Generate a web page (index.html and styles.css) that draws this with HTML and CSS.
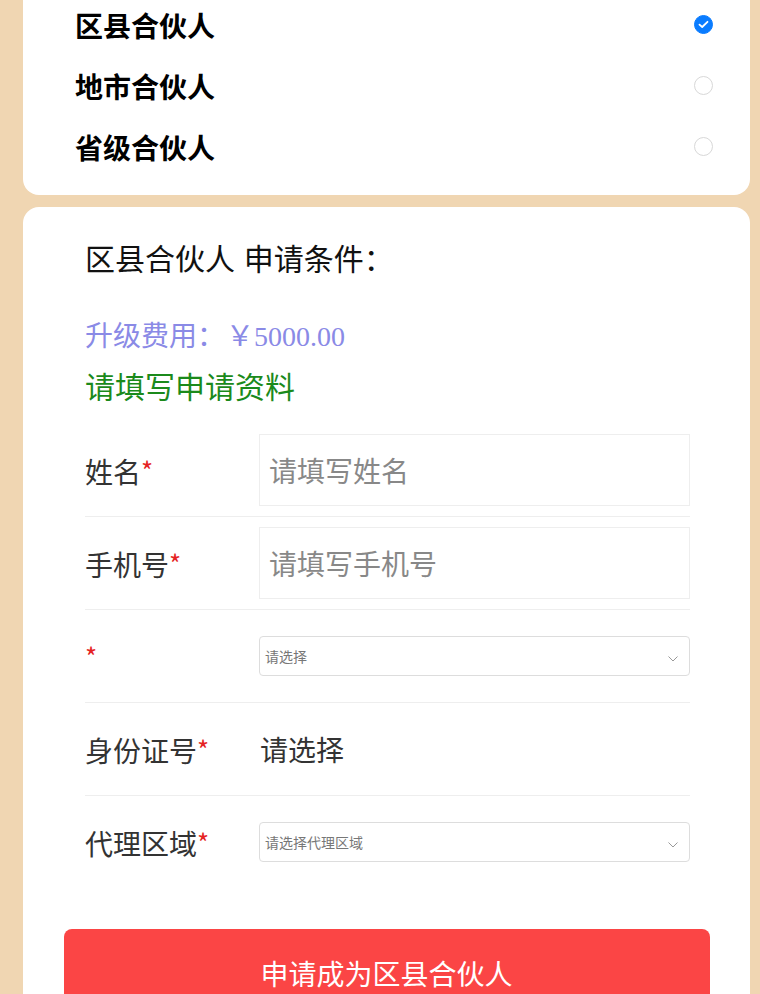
FILE: index.html
```
<!DOCTYPE html>
<html lang="zh-CN">
<head>
    <meta charset="UTF-8">
    <meta name="viewport" content="width=device-width, initial-scale=1.0">
    <title>申请合伙人</title>
    <link rel="stylesheet" href="styles.css">
</head>
<body>
    <div class="card level-card">
        <div class="level-row">
            <span class="level-name">区县合伙人</span>
            <span class="radio checked">
                <svg width="11" height="9" viewBox="0 0 11 9"><path d="M1.5 4.6 L4.2 7 L9.5 1.8" fill="none" stroke="#fff" stroke-width="1.8" stroke-linecap="round" stroke-linejoin="round"/></svg>
            </span>
        </div>
        <div class="level-row">
            <span class="level-name">地市合伙人</span>
            <span class="radio"></span>
        </div>
        <div class="level-row">
            <span class="level-name">省级合伙人</span>
            <span class="radio"></span>
        </div>
    </div>

    <div class="card apply-card">
        <div class="apply-body">
            <div class="apply-title">区县合伙人 申请条件：</div>
            <div class="fee">升级费用：<span class="price">￥5000.00</span></div>
            <div class="fill-tip">请填写申请资料</div>

            <div class="form-row">
                <div class="form-label">姓名<span class="req">*</span></div>
                <input class="form-input" type="text" placeholder="请填写姓名">
            </div>
            <div class="form-row">
                <div class="form-label">手机号<span class="req">*</span></div>
                <input class="form-input" type="text" placeholder="请填写手机号">
            </div>
            <div class="form-row">
                <div class="form-label"><span class="req">*</span></div>
                <div class="form-select">
                    <span>请选择</span>
                    <svg width="10" height="6" viewBox="0 0 10 6"><path d="M0.5 0.5 L5 5 L9.5 0.5" fill="none" stroke="#999" stroke-width="1"/></svg>
                </div>
            </div>
            <div class="form-row">
                <div class="form-label">身份证号<span class="req">*</span></div>
                <div class="form-text">请选择</div>
            </div>
            <div class="form-row last">
                <div class="form-label">代理区域<span class="req">*</span></div>
                <div class="form-select">
                    <span>请选择代理区域</span>
                    <svg width="10" height="6" viewBox="0 0 10 6"><path d="M0.5 0.5 L5 5 L9.5 0.5" fill="none" stroke="#999" stroke-width="1"/></svg>
                </div>
            </div>
        </div>
        <button class="submit-btn">申请成为区县合伙人</button>
    </div>
</body>
</html>
```

FILE: styles.css
```
body {
    margin: 0;
    padding: 0 10px 0 23px;
    background: #f0d6b2;
    font-family: "Noto Sans CJK SC", sans-serif;
    color: #333;
}
.card {
    background: #fff;
    border-radius: 16px;
}
.level-card {
    margin-top: -21px;
    padding: 15px 37px 18px 52px;
    border-top-left-radius: 0;
    border-top-right-radius: 0;
}
.level-row {
    height: 61px;
    display: flex;
    align-items: center;
    justify-content: space-between;
}
.level-name {
    font-size: 28px;
    font-weight: bold;
    color: #000;
}
.radio {
    width: 17px;
    height: 17px;
    border: 1px solid #d8d8d8;
    border-radius: 50%;
    display: flex;
    align-items: center;
    justify-content: center;
}
.radio.checked {
    background: #0a7cff;
    border-color: #0a7cff;
}
.apply-card {
    margin-top: 12px;
    padding: 30px 0 10px;
}
.apply-body {
    padding: 0 60px 0 62px;
}
.apply-title {
    font-size: 30px;
    line-height: 40px;
    color: #111;
    word-spacing: 2px;
}
.fee {
    margin-top: 32px;
    font-size: 28px;
    line-height: 50px;
    color: #8a8ae6;
}
.price {
    font-family: "Liberation Serif", serif;
    margin-left: 1px;
}
.fill-tip {
    font-size: 30px;
    line-height: 46px;
    color: #1b8a1b;
}
.form-row {
    margin-top: 16px;
    padding: 10px 0;
    height: 72px;
    display: flex;
    align-items: center;
    border-bottom: 1px solid #eee;
}
.form-row + .form-row {
    margin-top: 0;
}
.form-row.last {
    border-bottom: none;
}
.form-label {
    flex: 0 0 174px;
    font-size: 28px;
    line-height: 40px;
    color: #333;
}
.req {
    color: #e52222;
    font-size: 26px;
    vertical-align: 2px;
}
.form-input {
    flex: 1;
    box-sizing: border-box;
    height: 72px;
    border: 1px solid #eee;
    padding: 0 9px;
    font-family: inherit;
    font-size: 28px;
    color: #333;
    outline: none;
}
.form-input::placeholder {
    color: #888;
}
.form-select {
    flex: 1;
    box-sizing: border-box;
    height: 40px;
    border: 1px solid #ddd;
    border-radius: 4px;
    padding: 0 11px 0 5px;
    display: flex;
    align-items: center;
    justify-content: space-between;
    font-size: 14px;
    color: #777;
}
.form-select svg {
    margin-top: 6px;
}
.form-text {
    font-size: 28px;
    color: #333;
    padding-left: 1px;
}
.submit-btn {
    display: block;
    width: 646px;
    height: 88px;
    margin: 41px auto 0;
    border: none;
    border-radius: 8px;
    background: #fb4545;
    color: #fff;
    font-family: inherit;
    font-size: 28px;
    cursor: pointer;
}
```
